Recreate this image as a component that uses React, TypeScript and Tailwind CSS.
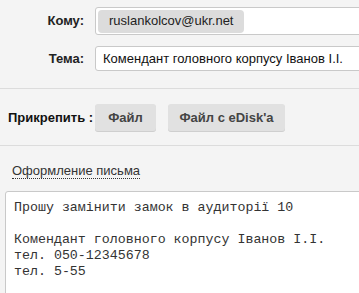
import React from 'react';

const labelCls = 'w-[95px] shrink-0 pr-[11px] text-right text-[13px] font-bold text-[#222]';

const App: React.FC = () => {
  return (
    <div className="h-[293px] w-[359px] overflow-hidden bg-[#f4f4f4] font-['Liberation_Sans',Arial,sans-serif]">
      <div className="pt-[7px]">
        <div className="flex items-center">
          <div className={labelCls}>Кому:</div>
          <div className="flex h-[28px] w-[300px] shrink-0 items-center rounded-l-[3px] border border-[#c9c9c9] bg-white pl-[2px]">
            <span className="flex h-[23px] items-center rounded-[4px] bg-[#dcdcdc] px-[11px] text-[13px] text-[#222]">
              ruslankolcov@ukr.net
            </span>
          </div>
        </div>
        <div className="mt-[11px] flex items-center">
          <div className={labelCls}>Тема:</div>
          <div className="flex h-[25px] w-[300px] shrink-0 items-center rounded-l-[3px] border border-[#c9c9c9] bg-white pl-[7px] text-[13px] text-[#111]">
            Комендант головного корпусу Іванов І.І.
          </div>
        </div>
      </div>

      <div className="mt-[17px] border-t border-[#dcdcdc]" />

      <div className="mt-[15px] flex items-center">
        <div className="w-[95px] shrink-0 pl-[8px] text-[13px] font-bold text-[#111]">Прикрепить :</div>
        <button className="h-[27px] w-[61px] rounded-[3px] bg-[#e1e1e1] text-[13px] font-bold text-[#444] shadow-[0_1px_0_#cfcfcf]">
          Файл
        </button>
        <button className="ml-[12px] h-[27px] w-[117px] rounded-[3px] bg-[#e1e1e1] text-[13px] font-bold text-[#444] shadow-[0_1px_0_#cfcfcf]">
          Файл с eDisk'a
        </button>
      </div>

      <div className="mt-[14px] border-t border-[#dcdcdc]" />

      <div className="mt-[16px] pl-[12px] leading-[15px]">
        <span className="border-b border-dotted border-[#333] text-[13px] leading-[15px] text-[#333]">
          Оформление письма
        </span>
      </div>

      <div className="ml-[5px] mt-[13px] h-[120px] w-[380px] rounded-l-[3px] border border-[#c9c9c9] bg-white pl-[8px] pt-[8px] font-['Liberation_Mono','Courier_New',monospace] text-[13.3px] leading-[16px] text-[#333] whitespace-pre">
        {'Прошу замінити замок в аудиторії 10\n\nКомендант головного корпусу Іванов І.І.\nтел. 050-12345678\nтел. 5-55'}
      </div>
    </div>
  );
};

export default App;
